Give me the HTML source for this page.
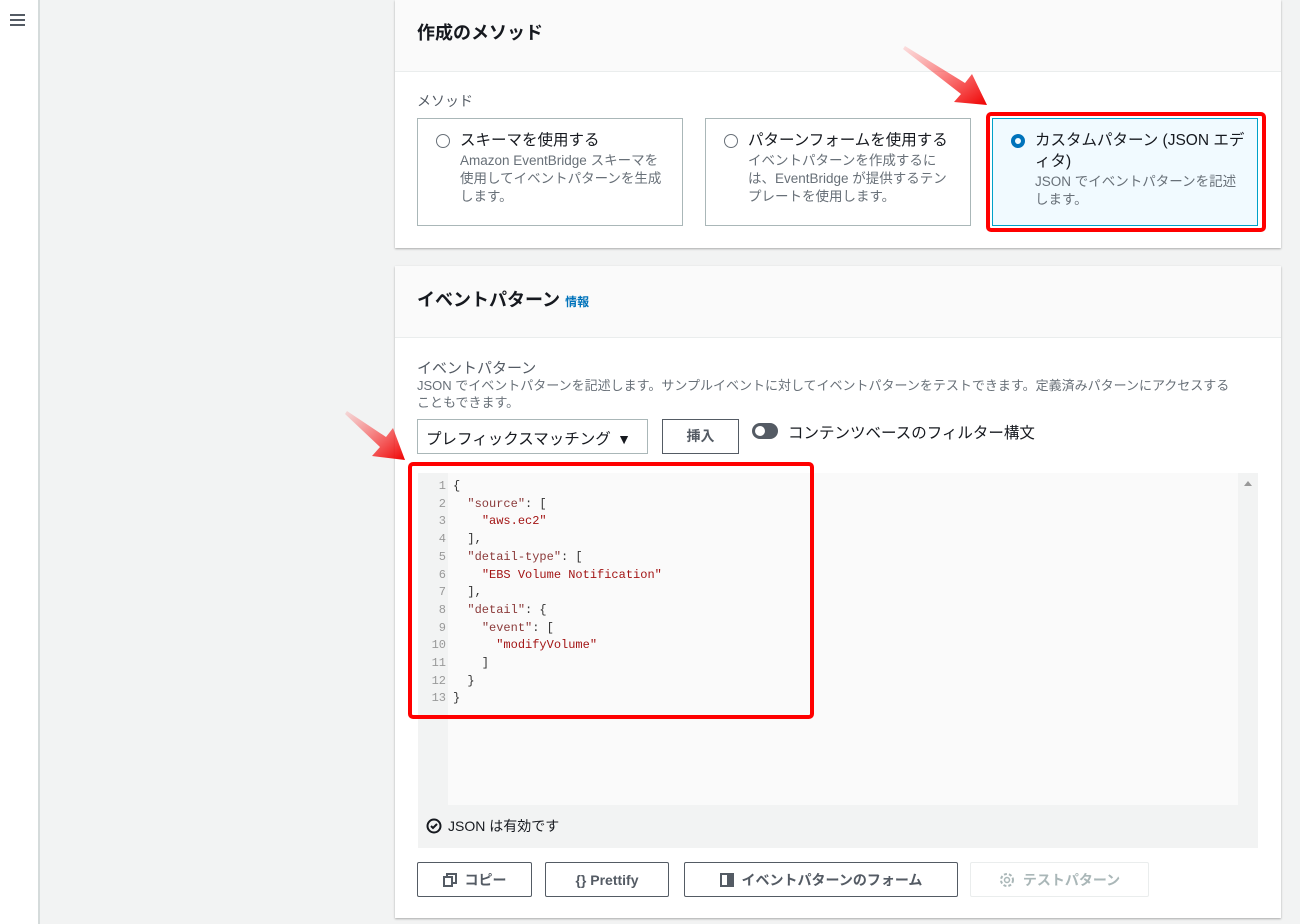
<!DOCTYPE html>
<html><head><meta charset="utf-8"><style>
*{box-sizing:border-box;margin:0;padding:0}
body{width:1300px;height:924px;background:#f2f3f3;font-family:"Liberation Sans","Noto Sans CJK JP",sans-serif;color:#16191f;position:relative;overflow:hidden}
.side{position:absolute;left:0;top:0;width:40px;height:924px;background:#fff;border-right:2px solid #d5dbdb}
.card{position:absolute;left:395px;width:886px;background:#fff;box-shadow:0 1px 2px rgba(0,0,0,.3);}
.hd{background:#fafafa;border-bottom:1px solid #eaeded;padding:0 22px;font-weight:bold;font-size:18px}
.abs{position:absolute}
.opt{position:absolute;top:118px;height:108px;border:1px solid #aab7b8;background:#fff;padding:11px 14px 0 42px;font-size:15.5px;line-height:21px}
.opt .r{position:absolute;left:18px;top:15px;width:14px;height:14px;border:1.5px solid #687078;border-radius:50%}
.opt small{display:block;font-size:13.5px;color:#687078;line-height:18px;margin-top:1px}
.btn{position:absolute;top:862px;height:35px;border:1px solid #545b64;border-radius:2px;background:#fff;font-weight:bold;font-size:14px;display:flex;align-items:center;justify-content:center;gap:8px;color:#545b64}
.code{position:absolute;left:418px;top:473px;width:840px;height:375px;background:#f2f3f3}
.gut{position:absolute;left:0;top:0;width:30px;height:332px;background:#f2f3f3}
.ed{position:absolute;left:30px;top:0;width:790px;height:332px;background:#fafafa}
pre{font-family:"Liberation Mono",monospace;font-size:12px;line-height:17.7px;color:#333}
.ln{position:absolute;left:0;top:5px;width:28px;text-align:right;color:#999}
.tx{position:absolute;left:35px;top:5px}
.s{color:#a31515}.k{color:#8b3a3a}
</style></head><body>
<div class="side"><div class="abs" style="left:10px;top:14px;width:15px;height:2px;background:#545b64;box-shadow:0 5px 0 #545b64,0 10px 0 #545b64"></div></div>

<div class="card" style="top:0;height:248px">
 <div class="hd" style="height:72px;line-height:66px">作成のメソッド</div>
 <div class="abs" style="left:22px;top:91px;font-size:14px;color:#545b64">メソッド</div>
</div>
<div class="opt" style="left:417px;width:266px"><span class="r"></span>スキーマを使用する<small>Amazon EventBridge スキーマを使用してイベントパターンを生成します。</small></div>
<div class="opt" style="left:705px;width:266px"><span class="r"></span>パターンフォームを使用する<small>イベントパターンを作成するには、EventBridge が提供するテンプレートを使用します。</small></div>
<div class="opt" style="left:992px;width:266px;background:#f1faff;border-color:#00a1c9;top:118px;height:108px;padding-right:12px"><span class="r" style="border:4px solid #0073bb"></span>カスタムパターン (JSON エディタ)<small>JSON でイベントパターンを記述します。</small></div>
<div class="abs" style="left:986px;top:112px;width:280px;height:120px;border:4px solid #f00;border-radius:5px"></div>

<div class="card" style="top:266px;height:652px">
 <div class="hd" style="height:72px;line-height:68px">イベントパターン <span style="color:#0073bb;font-size:12px">情報</span></div>
 <div class="abs" style="left:22px;top:91px;font-size:15px;color:#545b64">イベントパターン</div>
 <div class="abs" style="left:22px;top:111px;width:820px;font-size:13px;color:#687078;line-height:17px">JSON でイベントパターンを記述します。サンプルイベントに対してイベントパターンをテストできます。定義済みパターンにアクセスする<br>こともできます。</div>
</div>
<div class="abs" style="left:417px;top:419px;width:231px;height:35px;border:1px solid #aab7b8;font-size:15.5px;padding:7px 8px;color:#16191f">プレフィックスマッチング <span style="font-size:14px;margin-left:2px">▼</span></div>
<div class="abs" style="left:662px;top:419px;width:77px;height:35px;border:1px solid #545b64;font-size:14px;font-weight:bold;text-align:center;line-height:33px;color:#545b64">挿入</div>
<div class="abs" style="left:752px;top:423px;width:26px;height:16px;border-radius:8px;background:#545b64"><div class="abs" style="left:3px;top:3px;width:10px;height:10px;border-radius:50%;background:#fff"></div></div>
<div class="abs" style="left:788px;top:421px;font-size:15.5px">コンテンツベースのフィルター構文</div>

<div class="code">
 <div class="gut"></div><div class="ed"></div>
 <div class="abs" style="left:820px;top:0;width:20px;height:332px;background:#f2f3f3"><div class="abs" style="left:6px;top:8px;border:4px solid transparent;border-bottom:5px solid #999;border-top:0"></div></div>
 <pre class="ln">1
2
3
4
5
6
7
8
9
10
11
12
13</pre>
<pre class="tx">{
  <span class="k">"source"</span>: [
    <span class="s">"aws.ec2"</span>
  ],
  <span class="k">"detail-type"</span>: [
    <span class="s">"EBS Volume Notification"</span>
  ],
  <span class="k">"detail"</span>: {
    <span class="k">"event"</span>: [
      <span class="s">"modifyVolume"</span>
    ]
  }
}</pre>
 <div class="abs" style="left:8px;top:343px;font-size:14px;display:flex;align-items:center;gap:6px"><svg width="16" height="16"><circle cx="8" cy="8" r="6.5" fill="none" stroke="#16191f" stroke-width="2"/><path d="M5 8l2 2 4-4" fill="none" stroke="#16191f" stroke-width="2"/></svg>JSON は有効です</div>
</div>
<div class="abs" style="left:408px;top:462px;width:406px;height:257px;border:4px solid #f00;border-radius:5px"></div>

<div class="btn" style="left:417px;width:115px"><svg width="14" height="14"><rect x="1" y="4" width="8" height="9" fill="none" stroke="#545b64" stroke-width="2"/><path d="M4 4V1h9v9h-4" fill="none" stroke="#545b64" stroke-width="2"/></svg>コピー</div>
<div class="btn" style="left:545px;width:124px">{} Prettify</div>
<div class="btn" style="left:684px;width:274px"><svg width="14" height="14"><rect x="1" y="1" width="12" height="12" fill="none" stroke="#545b64" stroke-width="2"/><rect x="7" y="1" width="6" height="12" fill="#545b64"/></svg>イベントパターンのフォーム</div>
<div class="btn" style="left:970px;width:179px;border-color:#eaeded;color:#aab7b8"><svg width="16" height="16"><circle cx="8" cy="8" r="6" fill="none" stroke="#aab7b8" stroke-width="2" stroke-dasharray="3 2"/><circle cx="8" cy="8" r="2.5" fill="none" stroke="#aab7b8" stroke-width="1.5"/></svg>テストパターン</div>

<svg class="abs" style="left:0;top:0" width="1300" height="924">
 <defs><linearGradient id="g" x1="0" y1="0" x2="1" y2="1"><stop offset="0" stop-color="#f44" stop-opacity=".15"/><stop offset="1" stop-color="#e00"/></linearGradient></defs>
 <polygon points="905,46 965,83 972,74 987,105 954,102 961,94 903,49" fill="url(#g)"/>
 <polygon points="347,411 386,437 393,428 405,460 372,456 380,447 345,414" fill="url(#g)"/>
</svg>
</body></html>
